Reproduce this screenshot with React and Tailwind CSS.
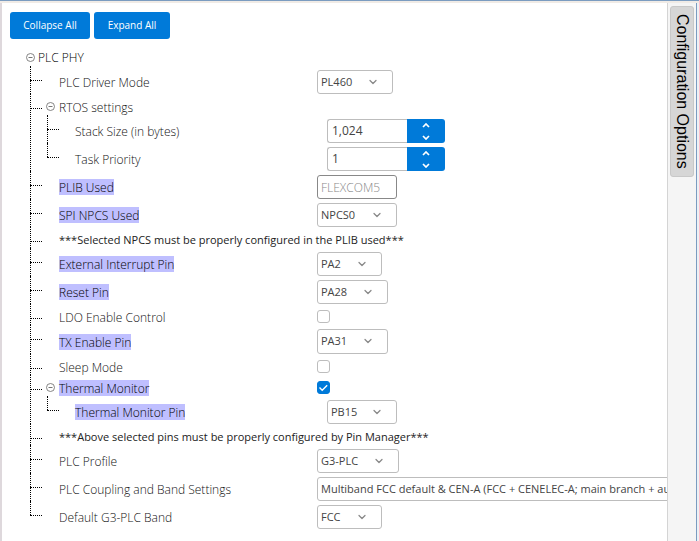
import { useState } from "react";
import { ChevronDown } from "lucide-react";
import clsx from "clsx";

function Toggle({ label, onClick }) {
  return (
    <button type="button" aria-label={label} onClick={onClick} className="relative z-10 shrink-0 bg-white">
      <svg width="9" height="9" viewBox="0 0 9 9" fill="none" stroke="#777777">
        <circle cx="4.5" cy="4.5" r="4" strokeWidth="0.9" />
        <path d="M2.5 4.5h4" />
      </svg>
    </button>
  );
}

function Label({ id, marked, children }) {
  return (
    <label
      htmlFor={id}
      className={clsx("pt-0.5 leading-[14px]", marked ? "bg-[#bfbfff] text-black" : "text-[#111111]")}
    >
      {children}
    </label>
  );
}

function Select({ id, value, width, tall }) {
  return (
    <div className={clsx("relative shrink-0", width)}>
      <select
        id={id}
        defaultValue={value}
        className={clsx(
          "block w-full appearance-none rounded-[3px] border border-[#bdbdbd] bg-white pl-[3px] text-[11px] font-normal text-[#444444]",
          tall ? "h-[25px]" : "h-6"
        )}
      >
        <option>{value}</option>
      </select>
      <ChevronDown
        size={12}
        strokeWidth={2.5}
        className="pointer-events-none absolute top-1.5 right-3.5 text-[#888888]"
      />
    </div>
  );
}

function Arrow({ d }) {
  return (
    <svg width="8" height="5" viewBox="0 0 8 5" fill="none" stroke="white" strokeWidth="1.7">
      <path d={d} />
    </svg>
  );
}

function Spinner({ id, initial }) {
  const [value, setValue] = useState(initial);

  return (
    <div className="flex h-6">
      <input
        id={id}
        type="text"
        value={value.toLocaleString("en-US")}
        onChange={(e) => setValue(Number(e.target.value.replace(/\D/g, "")))}
        className="w-20 rounded-l-[3px] border border-r-0 border-[#bdbdbd] bg-white pl-[4px] text-xs font-normal text-[#444444]"
      />
      <div className="flex w-[38px] flex-col overflow-hidden rounded-r-[3px] bg-[#007ad9]">
        <button
          type="button"
          aria-label="Increase"
          onClick={() => setValue(value + 1)}
          className="flex h-3 items-center justify-center"
        >
          <Arrow d="M1 4l3-3 3 3" />
        </button>
        <button
          type="button"
          aria-label="Decrease"
          onClick={() => setValue(value - 1)}
          className="flex h-3 items-center justify-center"
        >
          <Arrow d="M1 1l3 3 3-3" />
        </button>
      </div>
    </div>
  );
}

function Checkbox({ id, checked = false }) {
  const [on, setOn] = useState(checked);

  return (
    <div className="relative size-[13px]">
      <input
        id={id}
        type="checkbox"
        checked={on}
        onChange={(e) => setOn(e.target.checked)}
        className="block size-[13px] appearance-none rounded-[3px] border border-[#bdbdbd] bg-white checked:border-[#007ad9] checked:bg-[#007ad9]"
      />
      {on && (
        <svg
          viewBox="0 0 13 13"
          fill="none"
          stroke="white"
          strokeWidth="1.4"
          className="pointer-events-none absolute inset-0"
        >
          <path d="M2.5 6.5l2.7 2.7 5-5" />
        </svg>
      )}
    </div>
  );
}

// One tree node, the pseudo elements draw the dotted connector lines
function Node({ id, label, marked, short, tall, nested, toggle, control, children }) {
  const [open, setOpen] = useState(true);

  return (
    <li className="relative before:absolute before:-top-0.5 before:left-0 before:h-full before:border-l before:border-dotted before:border-black last:before:h-3.5 after:absolute after:top-3 after:left-0 after:w-3 after:border-t after:border-dotted after:border-black">
      <div className={clsx("flex items-center", short ? "h-[21px]" : tall ? "h-[29px]" : "h-7")}>
        <div
          className={clsx(
            "flex shrink-0 items-center",
            nested ? "w-[280px] pl-7" : "w-[287px]",
            !nested && (toggle ? "gap-1 pl-4" : "pl-[29px]")
          )}
        >
          {toggle && <Toggle label={"Toggle " + label} onClick={() => setOpen(!open)} />}
          <Label id={id} marked={marked}>
            {label}
          </Label>
        </div>
        {control}
      </div>
      {open && children}
    </li>
  );
}

function Note({ children }) {
  return (
    <li className="relative flex h-[21px] items-center pt-0.5 pl-[29px] text-[11px] font-normal text-[#222222] before:absolute before:-top-0.5 before:left-0 before:h-full before:border-l before:border-dotted before:border-black after:absolute after:top-3 after:left-0 after:w-3 after:border-t after:border-dotted after:border-black">
      {children}
    </li>
  );
}

export default function App() {
  const [open, setOpen] = useState(true);

  return (
    <div className="flex min-h-screen flex-col border-t border-[#7b9cc0] bg-[#f0ebe6] pt-px font-['Open_Sans','Noto_Sans',sans-serif] text-xs font-light">
      <div className="flex grow border-t border-[#f0ebe6]">
        <main className="min-w-0 flex-1 overflow-hidden border-l-2 border-[#ded8dc] bg-white pt-[9px] pl-2 whitespace-nowrap">
          <div className="flex gap-1 text-[10px] font-medium text-white">
            <button
              type="button"
              onClick={() => setOpen(false)}
              className="h-[27px] w-20 rounded-[3px] bg-[#007ad9]"
            >
              Collapse All
            </button>
            <button
              type="button"
              onClick={() => setOpen(true)}
              className="h-[27px] w-[76px] rounded-[3px] bg-[#007ad9]"
            >
              Expand All
            </button>
          </div>

          <div className="mt-2 flex h-[21px] items-center gap-[3px] pl-4 text-black">
            <Toggle label="Toggle PLC PHY" onClick={() => setOpen(!open)} />
            PLC PHY
          </div>

          {open && (
            <ul className="pl-5">
              <Node id="driver" label="PLC Driver Mode" control={<Select id="driver" value="PL460" width="w-[76px]" />} />
              <Node label="RTOS settings" short toggle>
                <ul className="pl-[17px]">
                  <Node id="stack" label="Stack Size (in bytes)" nested control={<Spinner id="stack" initial={1024} />} />
                  <Node id="priority" label="Task Priority" nested control={<Spinner id="priority" initial={1} />} />
                </ul>
              </Node>
              <Node
                id="plib"
                label="PLIB Used"
                marked
                control={
                  <input
                    id="plib"
                    type="text"
                    readOnly
                    value="FLEXCOM5"
                    className="h-6 w-20 rounded-[3px] border border-[#888888] bg-white pl-[3px] text-[#888888]"
                  />
                }
              />
              <Node id="npcs" label="SPI NPCS Used" marked control={<Select id="npcs" value="NPCS0" width="w-20" />} />
              <Note>***Selected NPCS must be properly configured in the PLIB used***</Note>
              <Node id="interrupt" label="External Interrupt Pin" marked control={<Select id="interrupt" value="PA2" width="w-[65px]" />} />
              <Node id="reset" label="Reset Pin" marked control={<Select id="reset" value="PA28" width="w-[71px]" />} />
              <Node id="ldo" label="LDO Enable Control" short control={<Checkbox id="ldo" />} />
              <Node id="tx" label="TX Enable Pin" marked tall control={<Select id="tx" value="PA31" width="w-[71px]" tall />} />
              <Node id="sleep" label="Sleep Mode" short control={<Checkbox id="sleep" />} />
              <Node id="thermal" label="Thermal Monitor" marked short toggle control={<Checkbox id="thermal" checked />}>
                <ul className="pl-[17px]">
                  <Node id="thermal-pin" label="Thermal Monitor Pin" marked nested control={<Select id="thermal-pin" value="PB15" width="w-[70px]" />} />
                </ul>
              </Node>
              <Note>***Above selected pins must be properly configured by Pin Manager***</Note>
              <Node id="profile" label="PLC Profile" control={<Select id="profile" value="G3-PLC" width="w-[82px]" />} />
              <Node
                id="coupling"
                label="PLC Coupling and Band Settings"
                control={
                  <Select
                    id="coupling"
                    value="Multiband FCC default & CEN-A (FCC + CENELEC-A; main branch + auxiliary branch)"
                    width="w-[520px]"
                  />
                }
              />
              <Node id="band" label="Default G3-PLC Band" control={<Select id="band" value="FCC" width="w-[65px]" />} />
            </ul>
          )}
        </main>

        <aside className="w-[30px] shrink-0 border-r border-l border-r-[#7b9cc0] border-l-[#d4d4d4] bg-[#f5f5f5] pt-[3px] pl-0.5">
          <button
            type="button"
            className="flex h-[171px] w-6 items-center justify-center rounded-[3px] border border-[#c8c8c8] bg-[#d6d6d6] font-['Liberation_Sans',Arial,sans-serif] text-base font-normal whitespace-nowrap text-black [writing-mode:vertical-rl]"
          >
            Configuration Options
          </button>
        </aside>
        <div className="w-0.5 shrink-0 bg-[#eef0f4]" />
      </div>
    </div>
  );
}
